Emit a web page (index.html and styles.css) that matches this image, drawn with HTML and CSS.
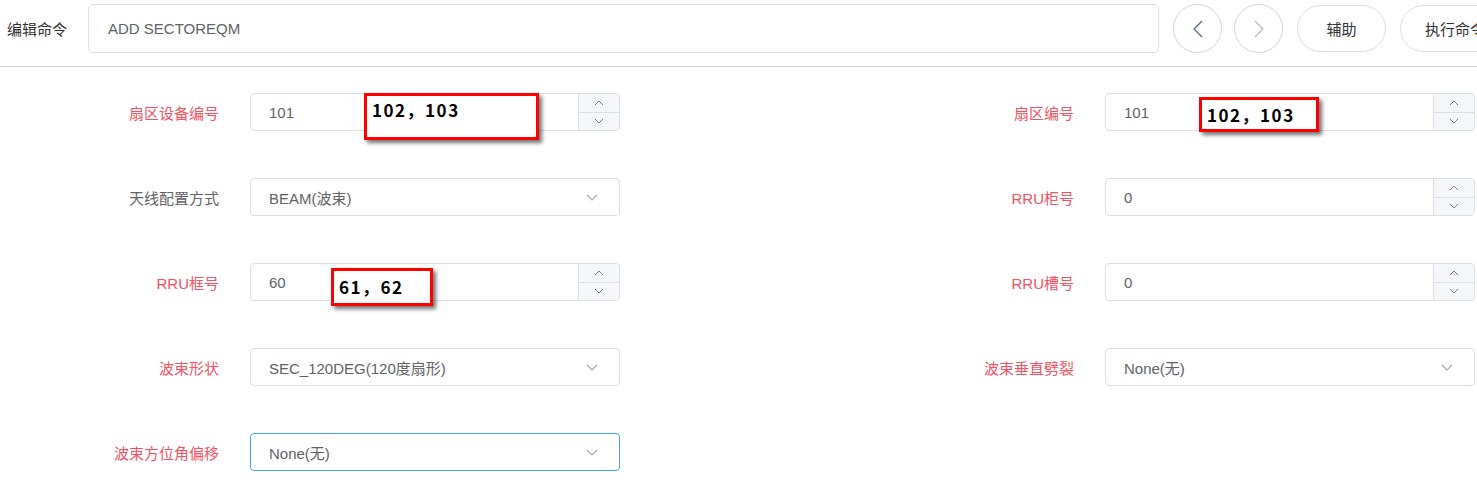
FILE: index.html
```html
<!DOCTYPE html>
<html lang="zh-CN">
<head>
    <meta charset="UTF-8">
    <meta name="viewport" content="width=device-width, initial-scale=1.0">
    <link rel="stylesheet" href="styles.css">
    <title>ADD SECTOREQM</title>
</head>
<body>
    <div class="cmd-bar">
        <div class="cmd-label">编辑命令</div>
        <div class="cmd-input">ADD SECTOREQM</div>
        <div class="circle-btn">
            <svg width="12" height="18" viewBox="0 0 12 18"><path d="M10 1 L2 9 L10 17" fill="none" stroke="#5a6b85" stroke-width="1.3"/></svg>
        </div>
        <div class="circle-btn next">
            <svg width="12" height="18" viewBox="0 0 12 18"><path d="M2 1 L10 9 L2 17" fill="none" stroke="#b8bcc4" stroke-width="1.3"/></svg>
        </div>
        <div class="pill-btn">辅助</div>
        <div class="pill-btn wide">执行命令</div>
    </div>

    <div class="form">
        <div class="label red">扇区设备编号</div>
        <div class="field number">
            <span class="value">101</span>
            <div class="spin">
                <div class="spin-up"><svg width="10" height="6" viewBox="0 0 10 6"><path d="M1 5 L5 1 L9 5" fill="none" stroke="#6f7f99" stroke-width="1"/></svg></div>
                <div class="spin-down"><svg width="10" height="6" viewBox="0 0 10 6"><path d="M1 1 L5 5 L9 1" fill="none" stroke="#6f7f99" stroke-width="1"/></svg></div>
            </div>
            <div class="note note-a">102，103</div>
        </div>
        <div class="label red">扇区编号</div>
        <div class="field number">
            <span class="value">101</span>
            <div class="spin">
                <div class="spin-up"><svg width="10" height="6" viewBox="0 0 10 6"><path d="M1 5 L5 1 L9 5" fill="none" stroke="#6f7f99" stroke-width="1"/></svg></div>
                <div class="spin-down"><svg width="10" height="6" viewBox="0 0 10 6"><path d="M1 1 L5 5 L9 1" fill="none" stroke="#6f7f99" stroke-width="1"/></svg></div>
            </div>
            <div class="note note-b">102，103</div>
        </div>

        <div class="label">天线配置方式</div>
        <div class="field select">
            <span class="value">BEAM(波束)</span>
            <svg class="caret" width="12" height="7" viewBox="0 0 12 7"><path d="M1 1 L6 6 L11 1" fill="none" stroke="#a0a6b2" stroke-width="1.2"/></svg>
        </div>
        <div class="label red">RRU柜号</div>
        <div class="field number">
            <span class="value">0</span>
            <div class="spin">
                <div class="spin-up"><svg width="10" height="6" viewBox="0 0 10 6"><path d="M1 5 L5 1 L9 5" fill="none" stroke="#6f7f99" stroke-width="1"/></svg></div>
                <div class="spin-down"><svg width="10" height="6" viewBox="0 0 10 6"><path d="M1 1 L5 5 L9 1" fill="none" stroke="#6f7f99" stroke-width="1"/></svg></div>
            </div>
        </div>

        <div class="label red">RRU框号</div>
        <div class="field number">
            <span class="value">60</span>
            <div class="spin">
                <div class="spin-up"><svg width="10" height="6" viewBox="0 0 10 6"><path d="M1 5 L5 1 L9 5" fill="none" stroke="#6f7f99" stroke-width="1"/></svg></div>
                <div class="spin-down"><svg width="10" height="6" viewBox="0 0 10 6"><path d="M1 1 L5 5 L9 1" fill="none" stroke="#6f7f99" stroke-width="1"/></svg></div>
            </div>
            <div class="note note-c">61，62</div>
        </div>
        <div class="label red">RRU槽号</div>
        <div class="field number">
            <span class="value">0</span>
            <div class="spin">
                <div class="spin-up"><svg width="10" height="6" viewBox="0 0 10 6"><path d="M1 5 L5 1 L9 5" fill="none" stroke="#6f7f99" stroke-width="1"/></svg></div>
                <div class="spin-down"><svg width="10" height="6" viewBox="0 0 10 6"><path d="M1 1 L5 5 L9 1" fill="none" stroke="#6f7f99" stroke-width="1"/></svg></div>
            </div>
        </div>

        <div class="label red">波束形状</div>
        <div class="field select">
            <span class="value">SEC_120DEG(120度扇形)</span>
            <svg class="caret" width="12" height="7" viewBox="0 0 12 7"><path d="M1 1 L6 6 L11 1" fill="none" stroke="#a0a6b2" stroke-width="1.2"/></svg>
        </div>
        <div class="label red">波束垂直劈裂</div>
        <div class="field select">
            <span class="value">None(无)</span>
            <svg class="caret" width="12" height="7" viewBox="0 0 12 7"><path d="M1 1 L6 6 L11 1" fill="none" stroke="#a0a6b2" stroke-width="1.2"/></svg>
        </div>

        <div class="label red">波束方位角偏移</div>
        <div class="field select focus">
            <span class="value">None(无)</span>
            <svg class="caret" width="12" height="7" viewBox="0 0 12 7"><path d="M1 1 L6 6 L11 1" fill="none" stroke="#a0a6b2" stroke-width="1.2"/></svg>
        </div>
    </div>
</body>
</html>
```

FILE: styles.css
```css
* {
    box-sizing: border-box;
}

body {
    margin: 0;
    background-color: #ffffff;
    font-family: "Liberation Sans", "Noto Sans CJK SC", sans-serif;
    font-size: 15px;
    color: #606266;
    overflow: hidden;
}

.cmd-bar {
    display: flex;
    align-items: center;
    padding: 4px 0 13px 7px;
    border-bottom: 1px solid #d3d5da;
    white-space: nowrap;
}

.cmd-label {
    width: 81px;
    flex-shrink: 0;
    color: #303133;
}

.cmd-input {
    width: 1071px;
    height: 49px;
    flex-shrink: 0;
    display: flex;
    align-items: center;
    padding-left: 19px;
    border: 1px solid #dcdfe6;
    border-radius: 5px;
    color: #606266;
}

.circle-btn {
    width: 49px;
    height: 49px;
    flex-shrink: 0;
    margin-left: 14px;
    border: 1px solid #d3d5da;
    border-radius: 50%;
    display: flex;
    align-items: center;
    justify-content: center;
}

.circle-btn.next {
    margin-left: 12px;
}

.pill-btn {
    width: 89px;
    height: 47px;
    flex-shrink: 0;
    margin-left: 14px;
    border: 1px solid #dcdfe6;
    border-radius: 24px;
    display: flex;
    align-items: center;
    justify-content: center;
    color: #303133;
}

.pill-btn.wide {
    width: 110px;
}

.form {
    display: grid;
    grid-template-columns: 219px 370px 1fr 370px;
    column-gap: 31px;
    row-gap: 47px;
    padding: 26px 2px 0 0;
}

.label {
    display: flex;
    align-items: center;
    justify-content: flex-end;
    color: #606266;
}

.label.red {
    color: #f5515f;
}

.field {
    position: relative;
    height: 38px;
    display: flex;
    align-items: center;
    border: 1px solid #dcdfe6;
    border-radius: 4px;
}

.field .value {
    flex: 1;
    padding-left: 18px;
}

.field.focus {
    border-color: #409eff;
}

.caret {
    margin-right: 21px;
}

.spin {
    width: 41px;
    height: 100%;
    display: flex;
    flex-direction: column;
    background-color: #f5f7fa;
    border-left: 1px solid #dcdfe6;
    border-radius: 0 4px 4px 0;
}

.spin-up, .spin-down {
    flex: 1;
    display: flex;
    align-items: center;
    justify-content: center;
}

.spin-up {
    border-bottom: 1px solid #dcdfe6;
}

/* red annotation boxes pasted over the screenshot */
.note {
    position: absolute;
    background-color: #ffffff;
    border: 3px solid #ff0000;
    box-shadow: 3px 3px 4px rgba(0, 0, 0, 0.55);
    font-family: "Noto Sans CJK SC", "DejaVu Sans", sans-serif;
    font-weight: bold;
    font-size: 17px;
    letter-spacing: 1.5px;
    color: #000000;
    white-space: nowrap;
}

.note-a {
    left: 113px;
    top: -1px;
    width: 175px;
    height: 47px;
    padding: 4px 0 0 5px;
    line-height: 20px;
}

.note-b {
    left: 93px;
    top: 3px;
    width: 120px;
    height: 35px;
    padding-left: 5px;
    line-height: 29px;
}

.note-c {
    left: 80px;
    top: 4px;
    width: 102px;
    height: 38px;
    padding-left: 5px;
    line-height: 32px;
}
```
